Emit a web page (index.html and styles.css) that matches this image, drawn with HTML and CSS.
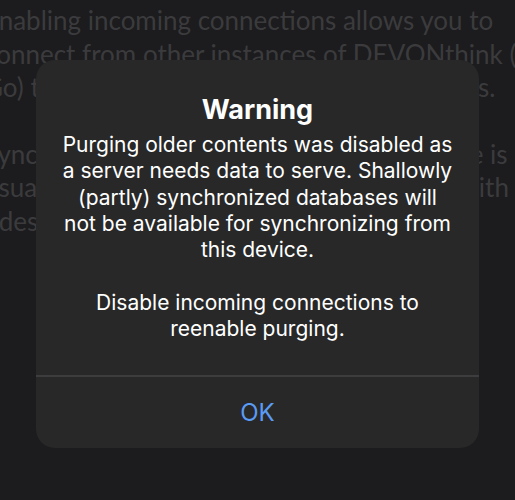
FILE: index.html
```html
<!DOCTYPE html>
<html>
<head>
<meta charset="utf-8">
<link rel="stylesheet" href="styles.css">
</head>
<body>
<div class="page">
  <div class="back">
    <p class="para">Enabling incoming connections allows you to<br>connect from other instances of DEVONthink (To<br>Go) to synchronize with your local databases.</p>
    <p class="para">Synchronizing with databases on this device is<br>usually faster than synchronizing them all with<br>odes other synchronization locations.</p>
  </div>
  <div class="alert">
    <div class="alert-body">
      <h1 class="alert-title">Warning</h1>
      <p class="alert-msg">Purging older contents was disabled as<br>a server needs data to serve. Shallowly<br>(partly) synchronized databases will<br>not be available for synchronizing from<br>this device.<br><br>Disable incoming connections to<br>reenable purging.</p>
    </div>
    <div class="alert-sep"></div>
    <div class="alert-btn">OK</div>
  </div>
</div>
</body>
</html>
```
FILE: styles.css
```css
html, body {
  margin: 0;
  padding: 0;
  background: #1c1c1e;
}
.page {
  position: relative;
  width: 515px;
  height: 500px;
  overflow: hidden;
}
.back {
  padding: 4px 0 0 0;
  margin-left: -16px;
  font-family: "Lato", "Noto Sans", sans-serif;
  font-size: 26px;
  line-height: 33.5px;
  color: #3b3b3d;
  white-space: nowrap;
}
.para {
  margin: 0 0 33px 0;
}
.alert {
  position: absolute;
  left: 36px;
  top: 60px;
  width: 443px;
  height: 388px;
  background: #282828;
  border-radius: 19px;
  display: flex;
  flex-direction: column;
  font-family: "Inter", "Noto Sans", sans-serif;
  color: #ffffff;
  text-align: center;
}
.alert-body {
  padding: 33px 10px 0 10px;
  height: 282px;
  box-sizing: border-box;
}
.alert-title {
  margin: 0;
  font-size: 27px;
  line-height: 34px;
  font-weight: 700;
}
.alert-msg {
  margin: 5px 0 0 0;
  font-size: 21px;
  line-height: 26.3px;
  font-weight: 400;
  white-space: nowrap;
}
.alert-sep {
  height: 2px;
  background: #3d3d3f;
  margin-top: 33px;
}
.alert-btn {
  flex: 1;
  display: flex;
  align-items: center;
  justify-content: center;
  font-size: 24px;
  color: #5a9bf4;
}
```
